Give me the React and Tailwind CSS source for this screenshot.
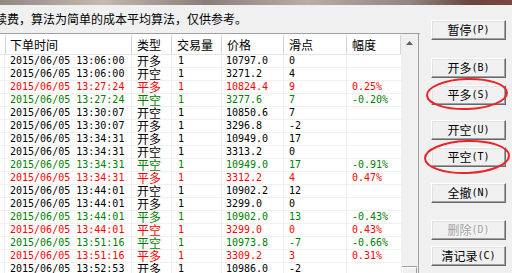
import React from 'react';

const cjk = { fontFamily: '"Noto Sans CJK SC", "Noto Sans", sans-serif' };
const mono = { fontFamily: '"DejaVu Sans Mono", "Liberation Mono", monospace' };

const rows = [
  ['13:06:00', '开多', '10797.0', '0', '', 'k'],
  ['13:06:00', '开空', '3271.2', '4', '', 'k'],
  ['13:27:24', '平多', '10824.4', '9', '0.25%', 'r'],
  ['13:27:24', '平空', '3277.6', '7', '-0.20%', 'g'],
  ['13:30:07', '开空', '10850.6', '7', '', 'k'],
  ['13:30:07', '开多', '3296.8', '-2', '', 'k'],
  ['13:34:31', '开多', '10949.0', '17', '', 'k'],
  ['13:34:31', '开空', '3313.2', '0', '', 'k'],
  ['13:34:31', '平空', '10949.0', '17', '-0.91%', 'g'],
  ['13:34:31', '平多', '3312.2', '4', '0.47%', 'r'],
  ['13:44:01', '开空', '10902.2', '12', '', 'k'],
  ['13:44:01', '开多', '3299.0', '0', '', 'k'],
  ['13:44:01', '平多', '10902.0', '13', '-0.43%', 'g'],
  ['13:44:01', '平空', '3299.0', '0', '0.43%', 'r'],
  ['13:51:16', '平空', '10973.8', '-7', '-0.66%', 'g'],
  ['13:51:16', '平多', '3309.2', '3', '0.31%', 'r'],
  ['13:52:53', '开多', '10986.0', '-2', '', 'k'],
];

const colors = { k: 'text-black', r: 'text-[#ff0000]', g: 'text-[#008000]' };

const headers = ['', '下单时间', '类型', '交易量', '价格', '滑点', '幅度'];

const WinButton = ({ label, hot, disabled, className = '' }) => (
  <div
    className={`h-[20px] w-[75px] flex items-center justify-center bg-[#f0f0f0] border-t border-l border-white border-b border-r border-b-[#696969] border-r-[#696969] shadow-[inset_-1px_-1px_0_#a0a0a0,inset_1px_1px_0_#e3e3e3] ${className}`}
  >
    <span
      style={cjk}
      className={`text-[12px] leading-none ${disabled ? 'text-[#a0a0a0] [text-shadow:1px_1px_0_#fff]' : 'text-black'}`}
    >
      {label}
    </span>
    <span
      style={mono}
      className={`text-[10px] leading-none ${disabled ? 'text-[#a0a0a0] [text-shadow:1px_1px_0_#fff]' : 'text-black'}`}
    >
      ({hot})
    </span>
  </div>
);

export default function App() {
  return (
    <div className="relative w-[512px] h-[273px] overflow-hidden bg-[#f0f0f0]">
      {/* blurred edge of the window above */}
      <div className="h-[5px] bg-[linear-gradient(90deg,#7a6e66,#b8aca2_20%,#6f625a_40%,#a99d93_60%,#786b63_80%,#4a1a12_92%,#5a1d14)] opacity-80" />

      <div className="flex">
        <div className="w-[420px] shrink-0">
          <div className="h-[28px] flex items-center overflow-hidden">
            <span style={cjk} className="text-[12px] text-black whitespace-nowrap -ml-[5px]">
              续费，算法为简单的成本平均算法，仅供参考。
            </span>
          </div>

          <div className="flex border-t border-[#a0a0a0] h-[240px]">
            <div className="w-[401px] bg-white">
              <div className="grid grid-cols-[5px_127px_40px_50px_62px_63px_54px] h-[21px] border-b border-[#e5e5e5]">
                {headers.map((h, i) => (
                  <div
                    key={i}
                    style={cjk}
                    className="border-r border-[#d5d5d5] pl-[5px] text-[12px] leading-[19px] text-black my-[1px]"
                  >
                    {h}
                  </div>
                ))}
              </div>
              {rows.map((r, i) => (
                <div
                  key={i}
                  className={`grid grid-cols-[5px_127px_40px_50px_62px_63px_54px] h-[13px] border-b border-[#f0f0f0] ${colors[r[5]]}`}
                >
                  <div className="border-r border-[#f0f0f0]" />
                  <div style={mono} className="border-r border-[#f0f0f0] pl-[5px] text-[10px] leading-[12px] whitespace-nowrap">
                    2015/06/05 {r[0]}
                  </div>
                  <div style={cjk} className="border-r border-[#f0f0f0] pl-[5px] text-[12px] leading-[12px]">
                    {r[1]}
                  </div>
                  <div style={mono} className="border-r border-[#f0f0f0] pl-[6px] text-[10px] leading-[12px]">
                    1
                  </div>
                  <div style={mono} className="border-r border-[#f0f0f0] pl-[4px] text-[10px] leading-[12px]">
                    {r[2]}
                  </div>
                  <div style={mono} className="border-r border-[#f0f0f0] pl-[5px] text-[10px] leading-[12px]">
                    {r[3]}
                  </div>
                  <div style={mono} className="pl-[5px] text-[10px] leading-[12px]">
                    {r[4]}
                  </div>
                </div>
              ))}
            </div>
            <div className="w-[18px] bg-[#f0f0f0] border-r border-[#a0a0a0] flex flex-col justify-between">
              <div className="h-[17px] flex items-center justify-center">
                <svg width="7" height="4" viewBox="0 0 7 4">
                  <path d="M3.5 0 L7 4 L0 4 Z" fill="#606060" />
                </svg>
              </div>
              <div className="h-[6px] mx-[1px] bg-[#f0f0f0] border-t border-l border-white border-r border-r-[#a0a0a0] shadow-[0_-1px_0_#a0a0a0]" />
            </div>
          </div>
        </div>

        <div className="ml-[11px] flex flex-col">
          <WinButton label="暂停" hot="P" className="mt-[15px]" />
          <WinButton label="开多" hot="B" className="mt-[18px]" />
          <WinButton label="平多" hot="S" className="mt-[7px]" />
          <WinButton label="开空" hot="U" className="mt-[15px]" />
          <WinButton label="平空" hot="T" className="mt-[7px]" />
          <WinButton label="全撤" hot="N" className="mt-[16px]" />
          <WinButton label="删除" hot="D" disabled className="mt-[17px]" />
          <WinButton label="清记录" hot="C" className="mt-[6px]" />
        </div>
      </div>

      {/* red hand-drawn circles */}
      <svg className="absolute left-0 top-0 pointer-events-none" width="512" height="273">
        <ellipse cx="467" cy="94" rx="40" ry="15" fill="none" stroke="#e8262a" strokeWidth="2" transform="rotate(-2 467 94)" />
        <ellipse cx="467" cy="157" rx="42" ry="16" fill="none" stroke="#e8262a" strokeWidth="2" transform="rotate(-2 467 157)" />
      </svg>
    </div>
  );
}
